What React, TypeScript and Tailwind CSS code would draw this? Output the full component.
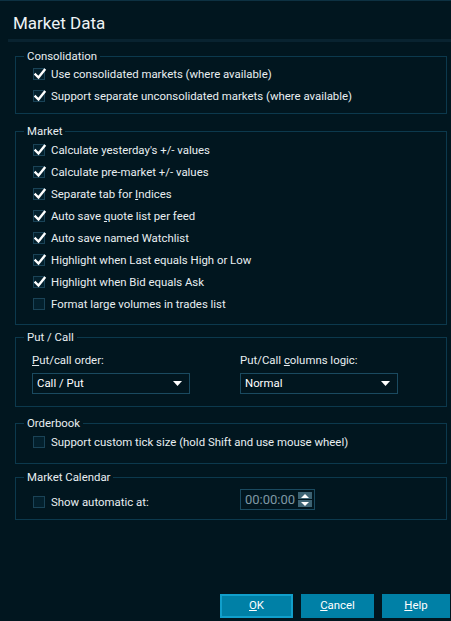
import type { ReactNode } from "react"

const font = { fontFamily: "Roboto, 'Liberation Sans', sans-serif" }

function Check({ checked }: { checked: boolean }) {
  return (
    <span className="relative w-[12px] h-[12px] shrink-0 border border-[#1a4357] bg-[#03202d]">
      {checked && (
        <svg className="absolute -left-[1px] -top-[2px]" width="14" height="14" viewBox="0 0 14 14">
          <path d="M2.5 7.5 L5.5 10.5 L11.5 3" fill="none" stroke="#ffffff" strokeWidth="2.4" strokeLinecap="square" />
        </svg>
      )}
    </span>
  )
}

function Row({ checked, children }: { checked: boolean; children: ReactNode }) {
  return (
    <div className="h-[22px] flex items-center gap-[6px] pl-[17px]">
      <Check checked={checked} />
      <span className="text-[11.4px] leading-[14px] text-[#e8eef1]">{children}</span>
    </div>
  )
}

function Group({ title, className, children }: { title: string; className: string; children: ReactNode }) {
  return (
    <fieldset className={`ml-[15px] mr-[4px] border border-[#0c394d] ${className}`}>
      <legend className="ml-[8px] px-[3px] text-[11.4px] leading-[14px] text-[#e8eef1]">{title}</legend>
      {children}
    </fieldset>
  )
}

function Select({ value }: { value: string }) {
  return (
    <div className="w-[158px] h-[21px] border border-[#1a4a60] flex items-center justify-between pl-[4px] pr-[7px]">
      <span className="text-[11.4px] text-white">{value}</span>
      <svg width="9" height="5" viewBox="0 0 9 5">
        <path d="M0 0 H9 L4.5 5 Z" fill="#ffffff" />
      </svg>
    </div>
  )
}

export default function App() {
  const market = [
    { label: <>Calculate yesterday's +/- values</>, on: true },
    { label: <>Calculate pre-market +/- values</>, on: true },
    { label: <>Separate tab for <u>I</u>ndices</>, on: true },
    { label: <>Auto save <u>q</u>uote list per feed</>, on: true },
    { label: <>Auto save named Watchlist</>, on: true },
    { label: <>Highlight when Last equals High or Low</>, on: true },
    { label: <>Highlight when Bid equals Ask</>, on: true },
    { label: <>Format large volumes in trades list</>, on: false },
  ]

  return (
    <div style={font} className="w-[451px] h-[621px] bg-[#01161f] border-t border-[#0d3142] flex flex-col overflow-hidden">
      <h1 className="pt-[12px] pl-[13px] text-[17px] leading-[20px] text-[#eef3f5] font-normal">Market Data</h1>
      <div className="mt-[6px] ml-[8px] h-[3px] bg-[#092330]" />

      <Group title="Consolidation" className="mt-[7px] pb-[6px]">
        <Row checked>Use consolidated markets (where available)</Row>
        <Row checked>Support separate unconsolidated markets (where available)</Row>
      </Group>

      <Group title="Market" className="mt-[10px] pt-[1px] pb-[9px]">
        {market.map((m, i) => (
          <Row key={i} checked={m.on}>{m.label}</Row>
        ))}
      </Group>

      <Group title="Put / Call" className="mt-[5px] pb-[12px]">
        <div className="flex pl-[16px] pt-[9px]">
          <div className="w-[208px] flex flex-col gap-[6px]">
            <span className="text-[11.4px] leading-[14px] text-[#e8eef1]"><u>P</u>ut/call order:</span>
            <Select value="Call / Put" />
          </div>
          <div className="flex flex-col gap-[6px]">
            <span className="text-[11.4px] leading-[14px] text-[#e8eef1]">Put/Call <u>c</u>olumns logic:</span>
            <Select value="Normal" />
          </div>
        </div>
      </Group>

      <Group title="Orderbook" className="mt-[9px] pt-[1px] pb-[10px]">
        <Row checked={false}>Support custom tick size (hold Shift and use mouse wheel)</Row>
      </Group>

      <Group title="Market Calendar" className="mt-[6px] pb-[6px]">
        <div className="flex pt-[5px]">
          <div className="w-[224px] mt-[2px]">
            <Row checked={false}>Show automatic at:</Row>
          </div>
          <div className="w-[75px] h-[21px] border border-[#1a4a60] flex items-center justify-between pl-[4px] pr-[2px]">
            <span className="text-[13px] text-[#7f98a4]">00:00:00</span>
            <div className="flex flex-col gap-[1px]">
              <div className="w-[14px] h-[7px] bg-[#3d6373] flex items-center justify-center">
                <svg width="8" height="4" viewBox="0 0 8 4"><path d="M0 4 H8 L4 0 Z" fill="#ffffff" /></svg>
              </div>
              <div className="w-[14px] h-[7px] bg-[#3d6373] flex items-center justify-center">
                <svg width="8" height="4" viewBox="0 0 8 4"><path d="M0 0 H8 L4 4 Z" fill="#ffffff" /></svg>
              </div>
            </div>
          </div>
        </div>
      </Group>

      <div className="mt-auto flex justify-end gap-[8px] pr-[1px] pb-[3px]">
        <button className="w-[73px] h-[24px] bg-[#0080a6] border-2 border-[#119fcb] text-[11.4px] text-white"><u>O</u>K</button>
        <button className="w-[73px] h-[24px] bg-[#0080a6] text-[11.4px] text-white"><u>C</u>ancel</button>
        <button className="w-[68px] h-[24px] bg-[#0080a6] text-[11.4px] text-white"><u>H</u>elp</button>
      </div>
    </div>
  )
}
